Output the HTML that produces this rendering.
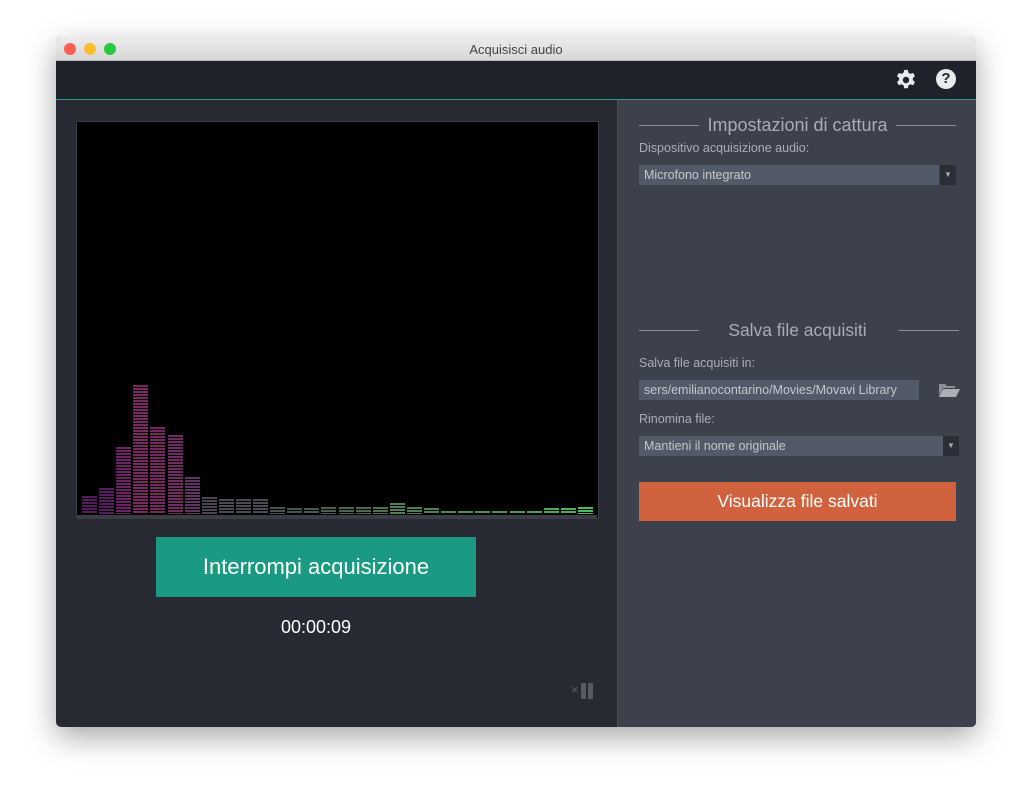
<!DOCTYPE html>
<html><head><meta charset="utf-8"><style>
body{margin:0;width:1032px;height:802px;background:#fff;position:relative;font-family:"Liberation Sans",sans-serif;overflow:hidden}
.a{position:absolute}
.win{left:56px;top:37px;width:920px;height:690px;box-shadow:0 10px 30px rgba(0,0,0,.35);border-radius:5px;overflow:hidden;background:#272a33}
.t{color:#a9adb5;font-size:12.5px}
.sel{background:#525a68;color:#c4c8ce;font-size:12.5px;height:20px;line-height:20px;padding-left:5px;box-sizing:border-box}
</style></head><body>
<div class="a win">
 <div class="a" style="left:0;top:0;width:920px;height:23px;background:linear-gradient(#ececec,#d8d8d8);border-bottom:1px solid #b8b8b8"></div>
 <div class="a" style="left:8px;top:6px;width:12px;height:12px;border-radius:6px;background:#fe5f57"></div>
 <div class="a" style="left:28px;top:6px;width:12px;height:12px;border-radius:6px;background:#febc2e"></div>
 <div class="a" style="left:48px;top:6px;width:12px;height:12px;border-radius:6px;background:#28c840"></div>
 <div class="a" style="left:0;top:5px;width:920px;text-align:center;font-size:13px;color:#444">Acquisisci audio</div>
 <div class="a" style="left:0;top:24px;width:920px;height:38px;background:#1f222a;border-bottom:1px solid #2a9a88"></div>
 <svg class="a" style="left:839px;top:32px" width="22" height="22" viewBox="0 0 24 24"><path fill="#e8eaee" d="M10 1h4l.6 3 2.3 1.3 2.9-1 2 3.5-2.3 2v2.4l2.3 2-2 3.5-2.9-1-2.3 1.3-.6 3h-4l-.6-3-2.3-1.3-2.9 1-2-3.5 2.3-2V9.8l-2.3-2 2-3.5 2.9 1L9.4 4z"/><circle cx="12" cy="12" r="3.5" fill="#1f222a"/></svg>
 <div class="a" style="left:880px;top:32px;width:20px;height:20px;border-radius:10px;background:#e8eaee;color:#1f222a;font-weight:bold;font-size:15px;text-align:center;line-height:20px">?</div>
 <div class="a" style="left:561px;top:63px;width:359px;height:627px;background:#3c414b;border-left:1px solid #4a4f59"></div>
 <div class="a" style="left:20px;top:84px;width:521px;height:396px;background:#000;border:1px solid #3a3d45"></div>
 <div id="bars"></div>
 <div class="a" style="left:20px;top:478px;width:521px;height:3px;background:#3a3d45"></div>
 <div class="a" style="left:100px;top:500px;width:320px;height:60px;background:#1a9a82;color:#fff;font-size:22px;text-align:center;line-height:60px">Interrompi acquisizione</div>
 <div class="a" style="left:100px;top:580px;width:320px;text-align:center;color:#fff;font-size:18px">00:00:09</div>
 <div class="a" style="left:515px;top:645px;color:#555a64;font-size:13px">×</div>
 <div class="a" style="left:525px;top:646px;width:5px;height:16px;background:#555a64"></div>
 <div class="a" style="left:532px;top:646px;width:5px;height:16px;background:#555a64"></div>

 <div class="a" style="left:583px;top:88px;width:60px;height:1px;background:#8a8f97"></div>
 <div class="a" style="left:840px;top:88px;width:60px;height:1px;background:#8a8f97"></div>
 <div class="a" style="left:583px;top:78px;width:317px;text-align:center;color:#a9adb5;font-size:18px">Impostazioni di cattura</div>
 <div class="a t" style="left:583px;top:104px">Dispositivo acquisizione audio:</div>
 <div class="a sel" style="left:583px;top:128px;width:300px">Microfono integrato</div>
 <div class="a" style="left:884px;top:128px;width:16px;height:20px;background:#2a2e36;color:#aaa;font-size:8px;text-align:center;line-height:20px">▼</div>

 <div class="a" style="left:583px;top:293px;width:60px;height:1px;background:#8a8f97"></div>
 <div class="a" style="left:843px;top:293px;width:60px;height:1px;background:#8a8f97"></div>
 <div class="a" style="left:583px;top:283px;width:317px;text-align:center;color:#a9adb5;font-size:17.4px">Salva file acquisiti</div>
 <div class="a t" style="left:583px;top:319px">Salva file acquisiti in:</div>
 <div class="a sel" style="left:583px;top:343px;width:280px;white-space:nowrap;overflow:hidden">sers/emilianocontarino/Movies/Movavi Library</div>
 <svg class="a" style="left:882px;top:345px" width="22" height="16" viewBox="0 0 22 16"><path fill="#8a9099" d="M1 2h6l2 2h8v2H5L1 14z"/><path fill="#aab0b8" d="M5 7h17l-4 8H1z"/></svg>
 <div class="a t" style="left:583px;top:375px">Rinomina file:</div>
 <div class="a sel" style="left:583px;top:399px;width:304px">Mantieni il nome originale</div>
 <div class="a" style="left:887px;top:399px;width:16px;height:20px;background:#2a2e36;color:#aaa;font-size:8px;text-align:center;line-height:20px">▼</div>
 <div class="a" style="left:583px;top:445px;width:317px;height:39px;background:#d0623d;color:#fff;font-size:17.5px;text-align:center;line-height:39px">Visualizza file salvati</div>
</div>
<script>
var tops=[496,488,447,385,427,435,477,497,499,499,499,507,508,508,507,507,507,507,503,507,508,511,511,511,511,511,511,508,508,507];
var cols=["#551a5c","#5a1c60","#6a2262","#7a2860","#74285e","#6e2c60","#5e3460","#4c4452","#4a4a55","#4a4c55","#4a4c55","#48524f","#48544f","#4a5a50","#4a6052","#4c6452","#4c6852","#4e7054","#50805a","#4e7c56","#4c8054","#4a8c52","#4a9052","#4a9452","#4a9852","#4a9c54","#4aa054","#4aa854","#4cb058","#4eb85a"];
var h="";
for(var i=0;i<30;i++){var x=82+i*17.1-56,t=tops[i]-37,b=514-37;
h+='<div class="a" style="left:'+x.toFixed(1)+'px;top:'+t+'px;width:15px;height:'+(b-t)+'px;background:repeating-linear-gradient(to bottom,'+cols[i]+' 0 2px,#000 2px 3px)"></div>';}
document.getElementById("bars").innerHTML=h;
</script>
</body></html>
